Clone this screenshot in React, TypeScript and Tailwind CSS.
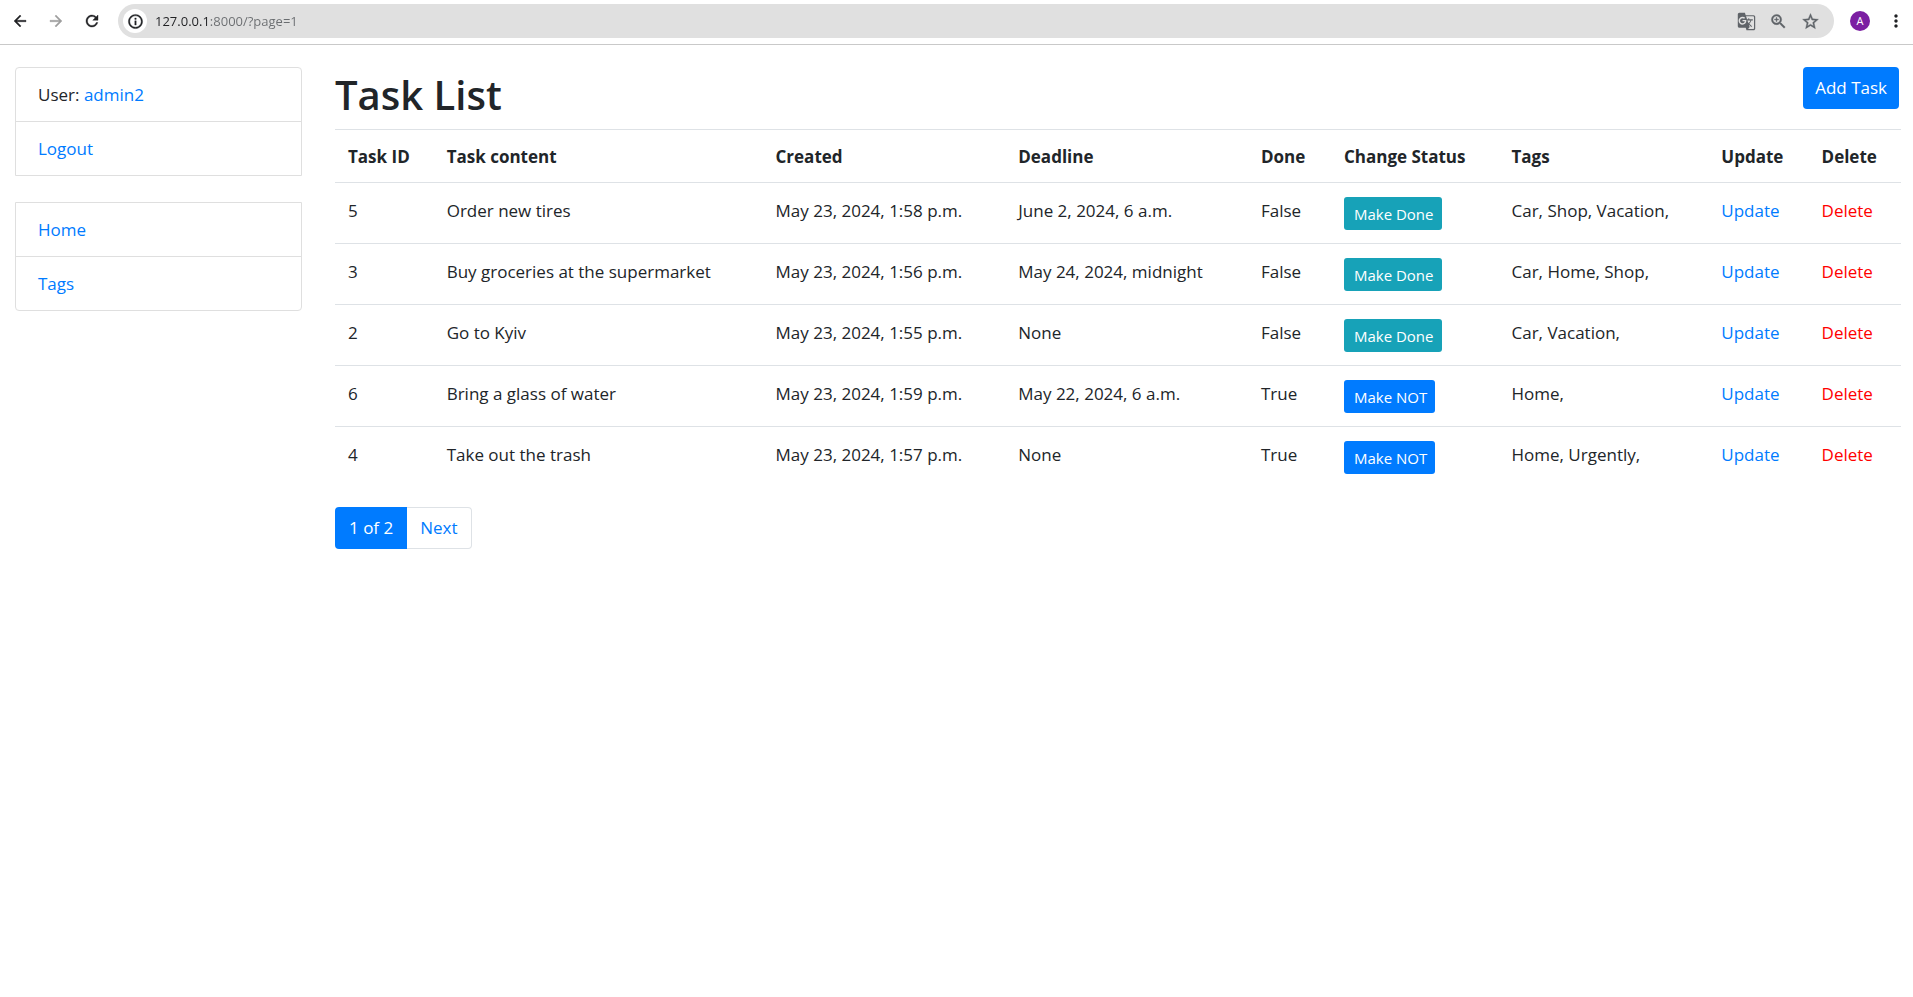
import { useState } from "react";
import type { ReactNode } from "react";
import {
  MdArrowBack,
  MdArrowForward,
  MdGTranslate,
  MdInfoOutline,
  MdMoreVert,
  MdRefresh,
  MdStarBorder,
  MdZoomIn,
} from "react-icons/md";

interface Task {
  id: number;
  content: string;
  created: string;
  deadline: string;
  done: boolean;
  tags: string;
}

const tasks: Task[] = [
  { id: 5, content: "Order new tires", created: "May 23, 2024, 1:58 p.m.", deadline: "June 2, 2024, 6 a.m.", done: false, tags: "Car, Shop, Vacation," },
  { id: 3, content: "Buy groceries at the supermarket", created: "May 23, 2024, 1:56 p.m.", deadline: "May 24, 2024, midnight", done: false, tags: "Car, Home, Shop," },
  { id: 2, content: "Go to Kyiv", created: "May 23, 2024, 1:55 p.m.", deadline: "None", done: false, tags: "Car, Vacation," },
  { id: 6, content: "Bring a glass of water", created: "May 23, 2024, 1:59 p.m.", deadline: "May 22, 2024, 6 a.m.", done: true, tags: "Home," },
  { id: 4, content: "Take out the trash", created: "May 23, 2024, 1:57 p.m.", deadline: "None", done: true, tags: "Home, Urgently," },
];

const columns = [
  { title: "Task ID", width: "w-[6.3%]" },
  { title: "Task content", width: "w-[21%]" },
  { title: "Created", width: "w-[15.5%]" },
  { title: "Deadline", width: "w-[15.5%]" },
  { title: "Done", width: "w-[5.3%]" },
  { title: "Change Status", width: "w-[10.7%]" },
  { title: "Tags", width: "w-[13.4%]" },
  { title: "Update", width: "w-[6.4%]" },
  { title: "Delete", width: "w-[5.9%]" },
];

function ToolButton({ label, children, color = "text-[#202124]" }: { label: string; children: ReactNode; color?: string }) {
  return (
    <button type="button" aria-label={label} className={`flex size-5 items-center justify-center ${color}`}>
      {children}
    </button>
  );
}

function BrowserBar() {
  const [address, setAddress] = useState("127.0.0.1:8000/?page=1");
  return (
    <header className="flex h-[45px] items-center border-b border-[#c9c9c9] pb-0.5 pl-2.5 pr-[7px] [&_path[fill=none]]:hidden">
      <nav aria-label="History" className="flex gap-4">
        <ToolButton label="Back"><MdArrowBack size={18} stroke="currentColor" strokeWidth={0.5} /></ToolButton>
        <ToolButton label="Forward" color="text-[#9e9e9e]"><MdArrowForward size={18} stroke="currentColor" strokeWidth={0.5} /></ToolButton>
        <ToolButton label="Reload"><MdRefresh size={18} stroke="currentColor" strokeWidth={0.5} /></ToolButton>
      </nav>
      <div className="ml-4 flex h-[34px] flex-1 items-center rounded-full bg-[#e0e0e0] pl-[5px] pr-[14px]">
        <button type="button" aria-label="Site information" className="flex size-6 items-center justify-center rounded-full bg-white text-[#202124]">
          <MdInfoOutline size={17} stroke="currentColor" strokeWidth={0.5} />
        </button>
        <input
          type="text"
          aria-label="Address"
          value={address}
          onChange={(event) => setAddress(event.target.value)}
          className="ml-2 min-w-0 flex-1 bg-linear-to-r from-[#202124] from-[54px] to-[#6a6d70] to-[54px] bg-clip-text text-[13px] leading-5 text-transparent caret-black outline-none"
        />
        <div className="flex gap-3">
          <ToolButton label="Translate" color="text-[#5f6368]"><MdGTranslate size={19} /></ToolButton>
          <ToolButton label="Zoom" color="text-[#5f6368]"><MdZoomIn size={19} stroke="currentColor" strokeWidth={0.5} /></ToolButton>
          <ToolButton label="Bookmark" color="text-[#5f6368]"><MdStarBorder size={19} stroke="currentColor" strokeWidth={0.5} /></ToolButton>
        </div>
      </div>
      <button type="button" aria-label="Profile" className="ml-4 flex size-5 items-center justify-center rounded-full bg-[#7b1fa2] text-[11px] text-white">
        A
      </button>
      <button type="button" aria-label="Menu" className="ml-4 flex size-5 items-center justify-center text-[#202124]">
        <MdMoreVert size={20} />
      </button>
    </header>
  );
}

function Sidebar() {
  return (
    <aside className="flex w-[287px] shrink-0 flex-col gap-[26px]">
      <ul className="divide-y divide-[#dfdfdf] rounded-t-[4px] border border-[#dfdfdf]">
        <li className="px-[22px] py-[13px] leading-[27px]">
          User: <a href="#profile" className="text-[#007bff]">admin2</a>
        </li>
        <li className="px-[22px] py-[13px] leading-[27px]">
          <a href="#logout" className="text-[#007bff]">Logout</a>
        </li>
      </ul>
      <ul className="divide-y divide-[#dfdfdf] rounded-b-[4px] border border-[#dfdfdf]">
        <li className="px-[22px] py-[13px] leading-[27px]">
          <a href="#home" className="text-[#007bff]">Home</a>
        </li>
        <li className="px-[22px] py-[13px] leading-[27px]">
          <a href="#tags" className="text-[#007bff]">Tags</a>
        </li>
      </ul>
    </aside>
  );
}

function Cell({ children }: { children: ReactNode }) {
  return <td className="px-[13px] pb-[11px] pt-[15px]">{children}</td>;
}

function TaskTable() {
  return (
    <table className="w-full table-fixed border-collapse text-left">
      <thead>
        <tr className="border-y border-[#dee2e6]">
          {columns.map((column) => (
            <th key={column.title} scope="col" className={`${column.width} whitespace-nowrap px-[13px] pb-3 pt-[14px] font-bold`}>
              {column.title}
            </th>
          ))}
        </tr>
      </thead>
      <tbody className="divide-y divide-[#dee2e6]">
        {tasks.map((task) => (
          <tr key={task.id} className="align-top whitespace-nowrap">
            <Cell>{task.id}</Cell>
            <Cell>{task.content}</Cell>
            <Cell>{task.created}</Cell>
            <Cell>{task.deadline}</Cell>
            <Cell>{task.done ? "True" : "False"}</Cell>
            <td className="px-[13px] pb-[13px] pt-[14px]">
              <button
                type="button"
                className={`block h-[33px] rounded-[3px] pl-2.5 pr-2 text-[15px] leading-5 text-white ${task.done ? "bg-[#007bff]" : "bg-[#17a2b8]"}`}
              >
                {task.done ? "Make NOT" : "Make Done"}
              </button>
            </td>
            <Cell>{task.tags}</Cell>
            <Cell><a href="#update" className="text-[#007bff]">Update</a></Cell>
            <Cell><a href="#delete" className="text-[#ff0000]">Delete</a></Cell>
          </tr>
        ))}
      </tbody>
    </table>
  );
}

export default function App() {
  return (
    <div className="min-h-screen bg-white font-['Open_Sans','Noto_Sans',sans-serif] text-[17px] leading-[26px] text-[#212529]">
      <BrowserBar />
      <div className="flex gap-[33px] pl-[15px] pr-3 pt-[22px]">
        <Sidebar />
        <main className="min-w-0 flex-1">
          <div className="flex h-[62px] items-start justify-between pr-0.5">
            <h1 className="text-[40px] font-semibold leading-[55px]">Task List</h1>
            <a href="#add" className="flex h-[42px] items-center rounded-[4px] bg-[#007bff] px-3 text-white">
              Add Task
            </a>
          </div>
          <TaskTable />
          <nav aria-label="Pages" className="mt-5 flex">
            <span aria-current="page" className="flex h-[42px] items-center rounded-l-[4px] bg-[#007bff] px-[14px] text-white">
              1 of 2
            </span>
            <a href="#next" className="flex h-[42px] items-center rounded-r-[4px] border border-l-0 border-[#dee2e6] px-[13px] text-[#007bff]">
              Next
            </a>
          </nav>
        </main>
      </div>
    </div>
  );
}
